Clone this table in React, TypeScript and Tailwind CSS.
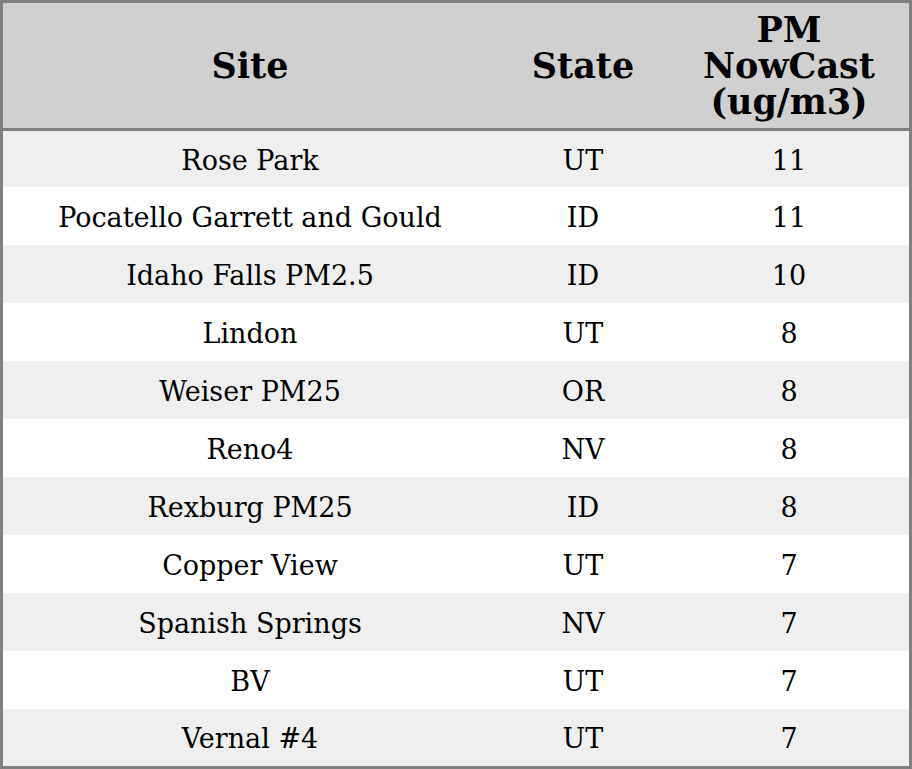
const rows: [string, string, string][] = [
  ["Rose Park", "UT", "11"],
  ["Pocatello Garrett and Gould", "ID", "11"],
  ["Idaho Falls PM2.5", "ID", "10"],
  ["Lindon", "UT", "8"],
  ["Weiser PM25", "OR", "8"],
  ["Reno4", "NV", "8"],
  ["Rexburg PM25", "ID", "8"],
  ["Copper View", "UT", "7"],
  ["Spanish Springs", "NV", "7"],
  ["BV", "UT", "7"],
  ["Vernal #4", "UT", "7"],
];

export default function App() {
  return (
    <div
      className="w-[912px] h-[769px] bg-white text-black"
      style={{ fontFamily: '"DejaVu Serif", serif' }}
    >
      <div className="w-[912px] h-[769px] border-[3px] border-[#808080] flex flex-col">
        <div className="grid grid-cols-[494px_172px_240px] h-[128px] shrink-0 bg-[#d0d0d0] border-b-[3px] border-[#808080] font-bold text-[35px] leading-[36px]">
          <div className="flex items-center justify-center text-center">Site</div>
          <div className="flex items-center justify-center text-center">State</div>
          <div className="flex items-center justify-center text-center">
            PM
            <br />
            NowCast
            <br />
            (ug/m3)
          </div>
        </div>
        {rows.map((r, i) => (
          <div
            key={i}
            className={
              "grid grid-cols-[494px_172px_240px] shrink-0 text-[27px] pt-[4px] " +
              (i % 2 === 0 ? "bg-[#efefef] " : "bg-white ") +
              (i === 0 ? "h-[56px]" : i === rows.length - 1 ? "h-[57px]" : "h-[58px]")
            }
          >
            <div className="flex items-center justify-center text-center">{r[0]}</div>
            <div className="flex items-center justify-center text-center">{r[1]}</div>
            <div className="flex items-center justify-center text-center">{r[2]}</div>
          </div>
        ))}
      </div>
    </div>
  );
}
